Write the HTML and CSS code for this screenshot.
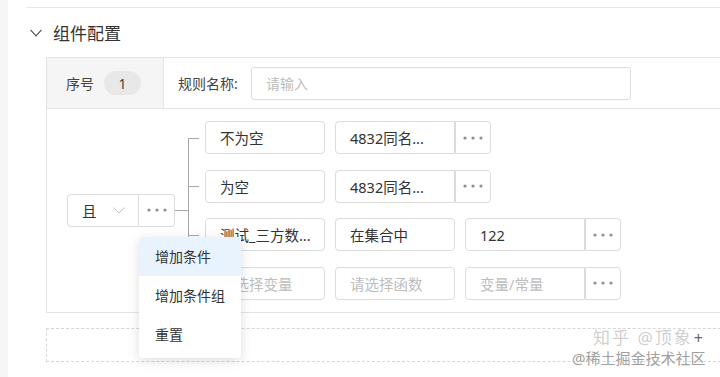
FILE: index.html
```html
<!DOCTYPE html>
<html lang="zh">
<head>
<meta charset="utf-8">
<link rel="stylesheet" href="styles.css">
</head>
<body>
<div class="page">
  <div class="side"></div>
  <div class="main">
    <div class="content">
      <div class="section-head">
        <svg class="chev" width="12" height="8" viewBox="0 0 12 8"><polyline points="0.5,0.8 6,6.8 11.5,0.8" fill="none" stroke="#555" stroke-width="1.2"/></svg>
        <span class="title">组件配置</span>
      </div>
      <div class="table">
        <div class="thead">
          <div class="idx"><span>序号</span><span class="badge">1</span></div>
          <div class="name"><span class="label">规则名称:</span><input class="input" placeholder="请输入"></div>
        </div>
        <div class="tbody">
          <div class="logic">
            <div class="sel"><span>且</span><svg class="sel-chev" width="12" height="7" viewBox="0 0 12 7"><polyline points="0.5,0.5 6,6 11.5,0.5" fill="none" stroke="#c4c4c4" stroke-width="1"/></svg></div>
            <div class="more">
              <svg width="20" height="4" viewBox="0 0 20 4"><circle cx="2" cy="2" r="1.6"/><circle cx="10" cy="2" r="1.6"/><circle cx="18" cy="2" r="1.6"/></svg>
              <div class="menu">
                <div class="item active">增加条件</div>
                <div class="item">增加条件组</div>
                <div class="item">重置</div>
              </div>
            </div>
          </div>
          <div class="stub"></div>
          <div class="rows">
            <div class="row">
              <div class="field">不为空</div>
              <div class="group"><div class="field">4832同名...</div><div class="more"><svg width="20" height="4" viewBox="0 0 20 4"><circle cx="2" cy="2" r="1.6"/><circle cx="10" cy="2" r="1.6"/><circle cx="18" cy="2" r="1.6"/></svg></div></div>
            </div>
            <div class="row">
              <div class="field">为空</div>
              <div class="group"><div class="field">4832同名...</div><div class="more"><svg width="20" height="4" viewBox="0 0 20 4"><circle cx="2" cy="2" r="1.6"/><circle cx="10" cy="2" r="1.6"/><circle cx="18" cy="2" r="1.6"/></svg></div></div>
            </div>
            <div class="row">
              <div class="field">测试_三方数...</div>
              <div class="field">在集合中</div>
              <div class="group"><div class="field">122</div><div class="more"><svg width="20" height="4" viewBox="0 0 20 4"><circle cx="2" cy="2" r="1.6"/><circle cx="10" cy="2" r="1.6"/><circle cx="18" cy="2" r="1.6"/></svg></div></div>
            </div>
            <div class="row">
              <div class="field ph">请选择变量</div>
              <div class="field ph">请选择函数</div>
              <div class="group"><div class="field ph">变量/常量</div><div class="more"><svg width="20" height="4" viewBox="0 0 20 4"><circle cx="2" cy="2" r="1.6"/><circle cx="10" cy="2" r="1.6"/><circle cx="18" cy="2" r="1.6"/></svg></div></div>
            </div>
          </div>
        </div>
      </div>
      <div class="add"></div>
    </div>
  </div>
  <div class="wm1">知乎 @顶象<span class="plus">+</span></div>
  <div class="wm2">@稀土掘金技术社区</div>
</div>
</body>
</html>
```
FILE: styles.css
```css
* { box-sizing: border-box; }
body {
  margin: 0;
  background: #fff;
  font-family: "Noto Sans", "Noto Sans CJK SC", sans-serif;
  color: #333;
  font-size: 14px;
}
.page {
  position: relative;
  display: flex;
  width: 720px;
  height: 377px;
  overflow: hidden;
}
.side { width: 8px; flex: none; background: #f6f6f6; }
.main { flex: 1; min-width: 0; }
.content {
  margin-left: 19px;
  margin-top: 7px;
  width: 740px;
  border-top: 1px solid #e6e6e6;
}
.section-head {
  display: flex;
  align-items: center;
  height: 49px;
  padding-left: 3px;
  gap: 11px;
}
.title { font-size: 17px; color: #333; }
.table {
  margin-left: 19px;
  width: 700px;
  border: 1px solid #e4e4e4;
}
.thead {
  display: flex;
  height: 51px;
  border-bottom: 1px solid #e4e4e4;
}
.idx {
  width: 117px;
  background: #f5f5f5;
  border-right: 1px solid #e4e4e4;
  display: flex;
  align-items: center;
  padding-left: 19px;
  gap: 10px;
  color: #444;
}
.badge {
  width: 37px;
  height: 24px;
  border-radius: 12px;
  background: #e8e8e8;
  display: flex;
  align-items: center;
  justify-content: center;
  color: #444;
}
.name {
  display: flex;
  align-items: center;
  padding-left: 14px;
}
.label { width: 73px; color: #444; }
.input {
  width: 380px;
  height: 33px;
  border: 1px solid #dcdcdc;
  border-radius: 3px;
  padding: 0 14px;
  font: inherit;
  font-size: 14px;
  outline: none;
}
.input::placeholder { color: #bdbdbd; }
.tbody {
  display: flex;
  align-items: center;
  padding: 12px 0 12px 20px;
}
.logic { display: flex; }
.sel {
  width: 72px;
  height: 33px;
  border: 1px solid #dcdcdc;
  border-radius: 4px 0 0 4px;
  display: flex;
  align-items: center;
  padding-left: 14px;
  gap: 16px;
  font-size: 14.5px;
}
.more {
  position: relative;
  width: 36px;
  height: 33px;
  border: 1px solid #dcdcdc;
  border-left: none;
  border-radius: 0 4px 4px 0;
  display: flex;
  align-items: center;
  justify-content: center;
  flex: none;
}
.more svg { fill: #8f8f8f; }
.stub { width: 13px; height: 1px; background: #a8a8a8; flex: none; }
.rows {
  display: flex;
  flex-direction: column;
  gap: 15.5px;
}
.row {
  position: relative;
  display: flex;
  gap: 10px;
  padding-left: 17px;
}
.row::before {
  content: "";
  position: absolute;
  left: 0;
  top: 50%;
  width: 11px;
  border-top: 1px solid #a8a8a8;
}
.row::after {
  content: "";
  position: absolute;
  left: 0;
  top: -8px;
  bottom: -8px;
  border-left: 1px solid #a8a8a8;
}
.row:first-child::after { top: 50%; }
.row:last-child::after { bottom: 50%; }
.field {
  width: 120px;
  height: 33px;
  border: 1px solid #dcdcdc;
  border-radius: 4px;
  padding-left: 14px;
  display: flex;
  align-items: center;
  white-space: nowrap;
  color: #333;
  font-size: 14.5px;
}
.field.ph { color: #bdbdbd; }
.group { display: flex; }
.group .field { border-radius: 4px 0 0 4px; }
.group .more { border-left: 1px solid #dcdcdc; }
.menu {
  position: absolute;
  top: calc(100% + 11px);
  left: 0;
  width: 102px;
  padding-bottom: 4px;
  background: #fff;
  border-radius: 4px;
  box-shadow: 0 3px 12px rgba(0, 0, 0, 0.13);
  z-index: 10;
  overflow: hidden;
}
.item {
  height: 39px;
  padding-left: 16px;
  display: flex;
  align-items: center;
  color: #333;
  white-space: nowrap;
}
.item.active { background: #e8f3fd; }
.add {
  margin: 15px 0 0 19px;
  width: 700px;
  height: 34px;
  border: 1px dashed #d6d6d6;
}
.wm1 {
  position: absolute;
  left: 593px;
  top: 330px;
  height: 15px;
  line-height: 15px;
  font-size: 17px;
  color: rgba(165, 165, 165, 0.55);
  white-space: nowrap;
  letter-spacing: 2px;
}
.plus { font-size: 16px; line-height: 15px; color: #666; position: relative; top: 0; left: 1px; }
.wm2 {
  position: absolute;
  left: 572px;
  top: 351px;
  line-height: 14px;
  font-size: 15px;
  color: #a0a0a0;
  white-space: nowrap;
  text-shadow: 0 0 1px #fff;
}
```
